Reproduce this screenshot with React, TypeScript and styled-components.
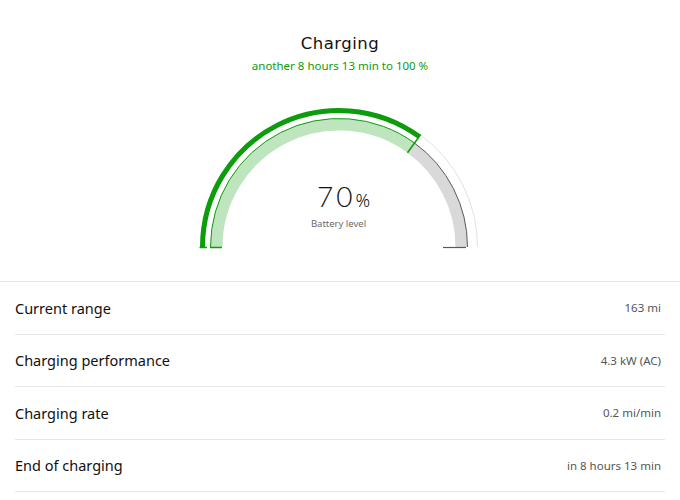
import styled, { createGlobalStyle } from 'styled-components';

const GlobalStyle = createGlobalStyle`
  html, body {
    margin: 0;
    padding: 0;
    background: #ffffff;
  }
  body {
    font-family: 'Noto Sans', 'DejaVu Sans', sans-serif;
    color: #111111;
  }
`;

const GREEN = '#0c9c0c';
const LIGHT_GREEN = '#bfe5bf';
const GRAY_BAND = '#d9d9d9';

const rows = [
  { label: 'Current range', value: '163 mi' },
  { label: 'Charging performance', value: '4.3 kW (AC)' },
  { label: 'Charging rate', value: '0.2 mi/min' },
  { label: 'End of charging', value: 'in 8 hours 13 min' },
];

// gauge geometry, in svg pixels
const CX = 145;
const CY = 142;
const LEVEL = 0.7;

function point(r: number, f: number) {
  const a = Math.PI * (1 - f);
  return { x: CX + r * Math.cos(a), y: CY - r * Math.sin(a) };
}

function arc(r: number, from: number, to: number) {
  const p1 = point(r, from);
  const p2 = point(r, to);
  const large = (to - from) * 180 > 180 ? 1 : 0;
  return `M ${p1.x} ${p1.y} A ${r} ${r} 0 ${large} 1 ${p2.x} ${p2.y}`;
}

function Gauge({ level }: { level: number }) {
  const tickIn = point(116.5, level);
  const tickOut = point(139, level);

  return (
    <svg width="290" height="148" viewBox="0 0 290 148">
      {/* outer ring */}
      <path d={arc(138.5, level, 1)} fill="none" stroke="#e2e2e2" strokeWidth="1" />
      <path d={arc(136.5, 0, level)} fill="none" stroke={GREEN} strokeWidth="5" />

      {/* inner band */}
      <path d={arc(122.5, 0, level)} fill="none" stroke={LIGHT_GREEN} strokeWidth="12" />
      <path d={arc(122.5, level, 1)} fill="none" stroke={GRAY_BAND} strokeWidth="12" />
      <path d={arc(128.5, 0, level)} fill="none" stroke={GREEN} strokeWidth="1" />
      <path d={arc(128.5, level, 1)} fill="none" stroke="#5a5a5a" strokeWidth="1" />

      {/* level marker */}
      <line x1={tickIn.x} y1={tickIn.y} x2={tickOut.x} y2={tickOut.y} stroke={GREEN} strokeWidth="1.5" />

      {/* feet */}
      <line x1={CX - 139.5} y1={CY + 0.5} x2={CX - 132} y2={CY + 0.5} stroke={GREEN} strokeWidth="1.5" />
      <line x1={CX - 129} y1={CY + 0.5} x2={CX - 117} y2={CY + 0.5} stroke={GREEN} strokeWidth="1.5" />
      <line x1={CX + 104} y1={CY + 0.5} x2={CX + 127} y2={CY + 0.5} stroke="#5a5a5a" strokeWidth="1.2" />
    </svg>
  );
}

export default function App() {
  return (
    <Page>
      <GlobalStyle />
      <Header>
        <Title>Charging</Title>
        <Subtitle>another 8 hours 13 min to 100 %</Subtitle>

        <GaugeWrap>
          <Gauge level={LEVEL} />
          <Reading>
            <Percent>
              70<PercentSign>%</PercentSign>
            </Percent>
            <ReadingLabel>Battery level</ReadingLabel>
          </Reading>
        </GaugeWrap>
      </Header>

      <List>
        {rows.map((row) => (
          <Row key={row.label}>
            <Label>{row.label}</Label>
            <Value>{row.value}</Value>
          </Row>
        ))}
      </List>
    </Page>
  );
}

const Page = styled.div`
  width: 680px;
  height: 500px;
  overflow: hidden;
  background: #ffffff;
`;

const Header = styled.div`
  display: flex;
  flex-direction: column;
  align-items: center;
  padding: 33px 0 28px;
  border-bottom: 1px solid #e6e6e6;
`;

const Title = styled.h1`
  margin: 0;
  font-family: 'DejaVu Sans', sans-serif;
  font-weight: 400;
  font-size: 16.5px;
  line-height: 22px;
  letter-spacing: 0.5px;
  color: #111111;
`;

const Subtitle = styled.div`
  margin-top: 4px;
  font-size: 11.5px;
  line-height: 14px;
  color: ${GREEN};
`;

const GaugeWrap = styled.div`
  position: relative;
  margin-top: 32px;
  margin-left: -3px;
  height: 148px;
`;

const Reading = styled.div`
  position: absolute;
  left: 0;
  right: 0;
  top: 76px;
  display: flex;
  flex-direction: column;
  align-items: center;
`;

const Percent = styled.div`
  margin-left: 10px;
  font-family: 'Lato', sans-serif;
  font-weight: 300;
  font-size: 28px;
  line-height: 30px;
  letter-spacing: 3px;
  color: #111111;
`;

const PercentSign = styled.span`
  font-family: 'Noto Sans', sans-serif;
  font-weight: 300;
  font-size: 18px;
  letter-spacing: 0;
`;

const ReadingLabel = styled.div`
  margin-top: 3px;
  font-size: 9.5px;
  line-height: 12px;
  color: #6a6a6a;
`;

const List = styled.div`
  display: flex;
  flex-direction: column;
  padding: 0 15px;
`;

const Row = styled.div`
  box-sizing: border-box;
  display: flex;
  align-items: center;
  justify-content: space-between;
  height: 52.5px;
  padding-right: 4px;
  border-bottom: 1px solid #e6e6e6;
`;

const Label = styled.div`
  font-size: 14.5px;
  color: #111111;
`;

const Value = styled.div`
  font-size: 11.5px;
  color: #555555;
`;
